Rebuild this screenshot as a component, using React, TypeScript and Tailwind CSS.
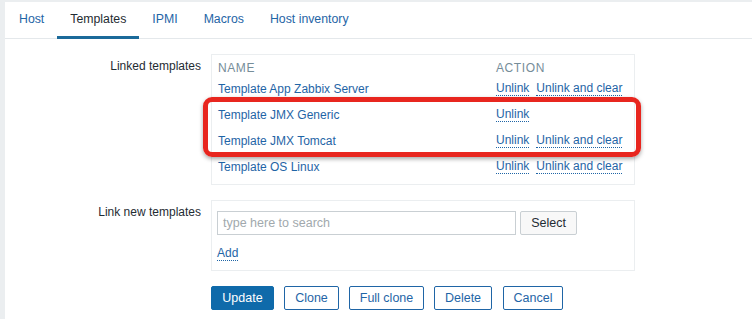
import React from "react";

const LINK = "text-[#1f65a6]";

function Dotted({ children }: { children: React.ReactNode }) {
  return (
    <span className={`${LINK} border-b border-dotted border-[#1f65a6] leading-[13px]`}>{children}</span>
  );
}

const rows: { name: string; clear: boolean }[] = [
  { name: "Template App Zabbix Server", clear: true },
  { name: "Template JMX Generic", clear: false },
  { name: "Template JMX Tomcat", clear: true },
  { name: "Template OS Linux", clear: true },
];

const BTN = "flex h-[24px] items-center justify-center rounded-[2px] border border-[#1f65a6] bg-white text-[#1f65a6]";

export default function App() {
  const tabs = ["Host", "Templates", "IPMI", "Macros", "Host inventory"];
  return (
    <div className="w-[752px] h-[319px] overflow-hidden bg-[#ebeef0] pl-[5px] pt-[2px] font-['Liberation_Sans',Arial,sans-serif] text-[12px] text-[#1f2c33]">
      <div className="relative h-full bg-white">
        {/* Tabs */}
        <div className="flex h-[37px] border-b border-[#e4e8eb] pl-px">
          {tabs.map((t) => (
            <div
              key={t}
              className={
                t === "Templates"
                  ? "flex items-center px-[13px] -mb-px border-b-[3px] border-[#1b6a9a] pt-[1px] text-[#1f2c33] text-[12.3px]"
                  : `flex items-center px-[13px] -mb-px border-b-[3px] border-transparent pt-[1px] ${LINK} text-[12.3px]`
              }
            >
              {t}
            </div>
          ))}
        </div>

        {/* Form */}
        <div className="pt-[15px]">
          {/* Linked templates */}
          <div className="flex">
            <div className="w-[196px] pt-[5px] pr-0 text-right leading-[14px] text-[#1f2c33]">Linked templates</div>
            <div className="ml-[10px] w-[424px] border border-[#ebeef0] pt-[6px] pb-[5px] pl-[6px]">
              <div className="flex h-[14px] items-center text-[#768d99] tracking-[0.6px] leading-[14px]">
                <div className="w-[278px]">NAME</div>
                <div>ACTION</div>
              </div>
              {rows.map((r) => (
                <div key={r.name} className="flex h-[26px] items-center leading-[14px] pt-px">
                  <div className={`w-[278px] ${LINK}`}>{r.name}</div>
                  <div className="flex gap-[7px]">
                    <Dotted>Unlink</Dotted>
                    {r.clear && <Dotted>Unlink and clear</Dotted>}
                  </div>
                </div>
              ))}
            </div>
          </div>

          {/* Link new templates */}
          <div className="mt-[15px] flex">
            <div className="w-[196px] pt-[5px] text-right leading-[14px] text-[#1f2c33]">Link new templates</div>
            <div className="ml-[10px] w-[424px] border border-[#ebeef0] pt-[10px] pb-[9px] pl-[5px]">
              <div className="flex">
                <div className="flex h-[24px] w-[299px] items-center border border-[#c9cfd3] pl-[5px] text-[#a1a9ad] text-[12.5px]">
                  type here to search
                </div>
                <div className="ml-[4px] flex h-[24px] w-[57px] items-center justify-center rounded-[2px] border border-[#c9cfd3] bg-[#f8f8f8] text-[#1f2c33] text-[12.5px]">
                  Select
                </div>
              </div>
              <div className="mt-[12px] flex h-[14px] items-center">
                <Dotted>Add</Dotted>
              </div>
            </div>
          </div>

          {/* Buttons */}
          <div className="mt-[15px] ml-[206px] flex text-[12.5px]">
            <div className="flex h-[24px] w-[63px] items-center justify-center rounded-[2px] border border-[#0f6aaa] bg-[#0f6aaa] text-white">Update</div>
            <div className={`${BTN} ml-[10px] w-[55px]`}>Clone</div>
            <div className={`${BTN} ml-[10px] w-[75px]`}>Full clone</div>
            <div className={`${BTN} ml-[10px] w-[58px]`}>Delete</div>
            <div className={`${BTN} ml-[11px] w-[60px]`}>Cancel</div>
          </div>
        </div>

        {/* Red highlight annotation */}
        <div className="pointer-events-none absolute left-[198px] top-[95px] h-[60px] w-[438px] rounded-[9px] border-[5px] border-[#e8261f] shadow-[0_2px_4px_rgba(0,0,0,0.35)]" />
      </div>
    </div>
  );
}
